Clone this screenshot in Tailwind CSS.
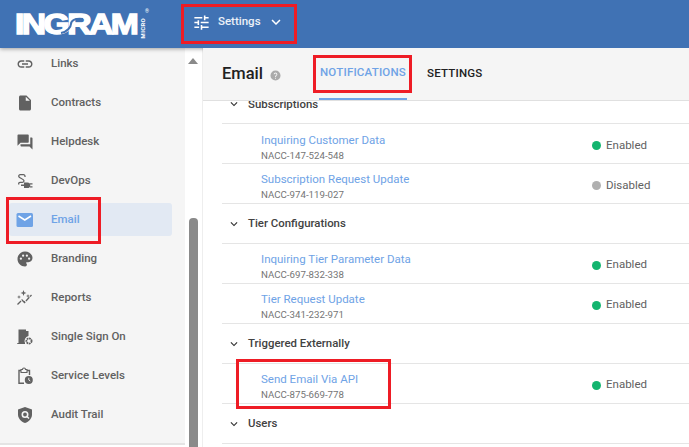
<!DOCTYPE html>
<html>
<head>
<meta charset="utf-8">
<script src="https://cdn.jsdelivr.net/npm/@tailwindcss/browser@4"></script>
</head>
<body class="m-0 overflow-hidden bg-white">
<div class="relative w-[689px] h-[447px] overflow-hidden bg-white font-['Roboto',sans-serif] flex flex-col">
  <header class="relative z-10 h-[48px] shrink-0 bg-[#4072b4] flex items-center text-white shadow-[0_1px_4px_rgba(0,0,0,0.35)]">
    <div class="relative w-[181px] h-full shrink-0">
      <div class="absolute left-[15px] top-[10px] h-[28px] origin-left scale-x-[1.16] font-['Liberation_Sans',sans-serif] font-black text-[29px] leading-[28px] tracking-[-2.2px] [-webkit-text-stroke:1.4px_white]">INGRAM</div>
      <svg class="absolute left-[60px] top-[13px] w-[24px] h-[24px]" viewBox="0 0 24 24" fill="none" stroke="#4072b4" stroke-width="2"><path d="M1 20c6-1 10-6 10-9 0-4 5-6 12-5"/></svg>
      <span class="absolute left-[139px] top-[18px] [writing-mode:vertical-rl] rotate-180 text-[6px] font-bold leading-[7px] tracking-[0.3px]">MICRO</span>
      <span class="absolute left-[145px] top-[9px] text-[5px] leading-[5px]">®</span>
    </div>
    <div class="w-[116px] h-full flex items-center pl-[11px] pb-[4px]">
      <svg class="w-[19px] h-[19px]" viewBox="0 0 24 24" fill="currentColor"><path d="M3 17v2h6v-2H3zM3 5v2h10V5H3zm10 16v-2h8v-2h-8v-2h-2v6h2zM7 9v2H3v2h4v2h2V9H7zm14 4v-2H11v2h10zm-6-4h2V7h4V5h-4V3h-2v6z"/></svg>
      <span class="ml-[7px] text-[11.5px] font-medium text-white/90">Settings</span>
      <svg class="ml-[6px] w-[18px] h-[18px]" viewBox="0 0 24 24" fill="currentColor"><path d="M7.410 8.590 12 13.170l4.590-4.580L18 10l-6 6-6-6z"/></svg>
    </div>
  </header>

  <div class="flex flex-1 min-h-0">
    <aside class="relative w-[185px] shrink-0 bg-[#f5f5f5] h-[397px] border-b-2 border-[#e4e4e4] flex flex-col pl-[9px] pr-[13px] overflow-hidden">
      <div class="mt-[-4px] flex flex-col text-[11.5px] font-medium text-[#616161]">
        <div class="h-[39.05px] flex items-center pl-[7px]"><svg class="w-[18px] h-[18px] text-[#616161]" viewBox="0 0 24 24" fill="currentColor"><path d="M3.900 12c0-1.710 1.390-3.100 3.100-3.100h4V7H7c-2.760 0-5 2.240-5 5s2.240 5 5 5h4v-1.900H7c-1.710 0-3.100-1.390-3.100-3.100zM8 13h8v-2H8v2zm9-6h-4v1.900h4c1.710 0 3.100 1.390 3.100 3.100s-1.390 3.100-3.100 3.100h-4V17h4c2.760 0 5-2.240 5-5s-2.240-5-5-5z"/></svg><span class="ml-[17px]">Links</span></div>
        <div class="h-[39.05px] flex items-center pl-[7px]"><svg class="w-[18px] h-[18px] text-[#616161]" viewBox="0 0 24 24" fill="currentColor"><path d="M14 2H6c-1.100 0-2 .9-2 2v16c0 1.100.9 2 2 2h12c1.100 0 2-.9 2-2V8l-6-6zm-1 7V3.500L18.500 9H13z"/></svg><span class="ml-[17px]">Contracts</span></div>
        <div class="h-[39.05px] flex items-center pl-[7px]"><svg class="w-[18px] h-[18px] text-[#616161]" viewBox="0 0 24 24" fill="currentColor"><path d="M21 6h-2v9H6v2c0 .55.45 1 1 1h11l4 4V7c0-.55-.45-1-1-1zm-4 6V3c0-.55-.45-1-1-1H3c-.55 0-1 .45-1 1v14l4-4h10c.55 0 1-.45 1-1z"/></svg><span class="ml-[17px]">Helpdesk</span></div>
        <div class="h-[39.05px] flex items-center pl-[7px]"><svg class="w-[18px] h-[18px] text-[#616161]" viewBox="0 0 18 18" fill="none" stroke="currentColor"><path d="M9 5V4.200A1.500 1.500 0 0 0 7.500 2.700H4.200A1.500 1.500 0 0 0 2.700 4.200C2.700 6.500 8 6.500 8 8.800A1.500 1.500 0 0 1 6.500 10.300H4A1.300 1.300 0 0 0 2.700 11.600V12.500" stroke-width="1.300"/><path d="M8 10.500h3.500a2.800 2.800 0 0 1 0 5.600H8zM5 12.600h3v1.400H5z" fill="currentColor" stroke="none"/><path d="M14 11.800h2.500M14 14.800h2.500" stroke-width="1.300"/></svg><span class="ml-[17px]">DevOps</span></div>
        <div class="h-[33px] my-[3.025px] flex items-center pl-[7px] bg-[#e2e9f3] rounded-[3px] text-[#6fa3e6]"><svg class="w-[18px] h-[18px]" viewBox="0 0 18 18"><rect x="0.500" y="2" width="16.500" height="14" rx="1.500" fill="#6fa3e6"/><path d="M2.500 5 8.800 9 15 5" fill="none" stroke="#fff" stroke-width="1.500"/></svg><span class="ml-[17px]">Email</span></div>
        <div class="h-[39.05px] flex items-center pl-[7px]"><svg class="w-[18px] h-[18px] text-[#616161]" viewBox="0 0 24 24" fill="currentColor"><path d="M12 2C6.490 2 2 6.490 2 12s4.490 10 10 10a2.500 2.500 0 0 0 1.870-4.160c-.3-.33-.37-.7-.2-1.040.17-.36.54-.6.950-.6H16.500c3.030 0 5.500-2.470 5.500-5.500C22 5.860 17.510 2 12 2zM6.500 13a1.500 1.500 0 1 1 0-3 1.500 1.500 0 0 1 0 3zm3-4a1.500 1.500 0 1 1 0-3 1.500 1.500 0 0 1 0 3zm5 0a1.500 1.500 0 1 1 0-3 1.500 1.500 0 0 1 0 3zm3 4a1.500 1.500 0 1 1 0-3 1.500 1.500 0 0 1 0 3z"/></svg><span class="ml-[17px]">Branding</span></div>
        <div class="h-[39.05px] flex items-center pl-[7px]"><svg class="w-[18px] h-[18px] text-[#616161]" viewBox="0 0 18 18" fill="currentColor"><path d="M1.500 15.500 6 11l2.500 2.500 7-7.500" fill="none" stroke="currentColor" stroke-width="1.300" stroke-dasharray="5 1"/><path d="M7.500 1 8.300 3.200 10.500 4 8.300 4.800 7.500 7 6.700 4.800 4.500 4 6.700 3.200zM3 6 3.500 7.500 5 8 3.500 8.500 3 10 2.500 8.500 1 8 2.500 7.500zM12 5 12.500 6.500 14 7 12.500 7.500 12 9 11.500 7.500 10 7 11.500 6.500z"/></svg><span class="ml-[17px]">Reports</span></div>
        <div class="h-[39.05px] flex items-center pl-[7px]"><svg class="w-[18px] h-[18px] text-[#616161]" viewBox="0 0 18 18" fill="currentColor"><path d="M2.500 15V1.500H10V3h2.500v5A5 5 0 0 0 9 15H1.500v1H9v-1zM7.500 8h1.300v1.500H7.500z"/><path d="M1.500 15h7v1h-7z"/><circle cx="13" cy="13" r="2.600" fill="none" stroke="currentColor" stroke-width="1.800" stroke-dasharray="1.800 .6"/></svg><span class="ml-[17px]">Single Sign On</span></div>
        <div class="h-[39.05px] flex items-center pl-[7px]"><svg class="w-[18px] h-[18px] text-[#616161]" viewBox="0 0 18 18" fill="none" stroke="currentColor" stroke-width="1.400"><path d="M8 16.300H3V3.500h2M11 3.500h2.500V8"/><path d="M5 2.500h1.500a1.500 1.500 0 0 1 3 0H11v3H5z" stroke-width="1.100"/><circle cx="12.800" cy="13" r="4" fill="currentColor" stroke="none"/><path d="M12.800 10.800V13l1.500 1" stroke="#f5f5f5" stroke-width="0.900"/></svg><span class="ml-[17px]">Service Levels</span></div>
        <div class="h-[39.05px] flex items-center pl-[7px]"><svg class="w-[18px] h-[18px] text-[#616161]" viewBox="0 0 18 18"><path d="M9 1 16 3.500v5c0 4-3 7.200-7 8.500-4-1.300-7-4.500-7-8.500v-5z" fill="currentColor"/><circle cx="9" cy="8.500" r="2.700" fill="none" stroke="#f5f5f5" stroke-width="1.600"/><path d="m11 10.500 2 2" stroke="#f5f5f5" stroke-width="1.500"/></svg><span class="ml-[17px]">Audit Trail</span></div>
      </div>
    </aside>

    <div class="relative w-[17px] shrink-0 bg-white">
      <div class="absolute left-[3px] top-[10px] w-0 h-0 border-x-[5px] border-x-transparent border-b-[6px] border-b-[#8a8a8a]"></div>
      <div class="absolute left-[4px] top-[170px] w-[9px] h-[240px] rounded-[4px] bg-[#8a8a8a]"></div>
    </div>

    <main class="flex-1 min-w-0 h-[399px] overflow-hidden border-l border-[#eeeeee] flex flex-col">
      <div class="relative z-10 h-[53px] shrink-0 bg-[#f5f5f5] border-b border-[#e0e0e0] flex pl-[19px]">
        <div class="flex items-center">
          <span class="text-[16.5px] font-medium text-[#212121]">Email</span>
          <svg class="ml-[7px] mt-[2px] w-[11px] h-[11px]" viewBox="0 0 24 24" fill="#aaaaaa"><path d="M12 1a11 11 0 1 0 0 22 11 11 0 0 0 0-22zm1 18h-2v-2h2v2zm2.500-7.700-.9.9c-.8.800-1.300 1.300-1.300 3.300h-2.300v-.5c0-1.100.5-2.100 1.300-2.900l1.200-1.300c.4-.3.600-.8.600-1.300a2 2 0 0 0-4 0H8a4 4 0 0 1 8 0c0 .7-.2 1.300-.5 1.800z"/></svg>
        </div>
        <div class="ml-[38px] w-[88px] h-full border-b-[2px] border-[#6fa3e6] -mb-px flex items-center justify-center text-[11.5px] font-medium tracking-[0.2px] text-[#6fa3e6] whitespace-nowrap">NOTIFICATIONS</div>
        <div class="ml-[20px] flex items-center text-[11.5px] font-medium tracking-[0.2px] text-[#212121]">SETTINGS</div>
      </div>

      <div class="pl-[19px] text-[11.4px]">
        <div class="relative h-[24px] -mt-[1px] border-b border-[#e5e5e5] flex items-end pb-[12px] font-medium text-[#424242]"><svg class="w-[14px] h-[14px] ml-[5px] mr-[7px] text-[#333] shrink-0" viewBox="0 0 24 24" fill="currentColor"><path d="M7.410 8.590 12 13.170l4.590-4.580L18 10l-6 6-6-6z"/></svg><span class="leading-[14px]">Subscriptions</span></div>

        <div class="h-[40px] border-b border-[#e5e5e5] flex items-center pl-[39px] pt-[4px]"><div class="w-[331px] pt-[3px]"><div class="text-[#6fa3e6] text-[11.5px] leading-[16px]">Inquiring Customer Data</div><div class="text-[#757575] text-[9.7px] leading-[15px]">NACC-147-524-548</div></div><span class="w-[9px] h-[9px] rounded-full bg-[#13b56f]"></span><span class="ml-[5px] text-[#616161] text-[11.5px]">Enabled</span></div>
        <div class="h-[39.500px] border-b border-[#e5e5e5] flex items-center pl-[39px] pt-[4px]"><div class="w-[331px] pt-[3px]"><div class="text-[#6fa3e6] text-[11.5px] leading-[16px]">Subscription Request Update</div><div class="text-[#757575] text-[9.7px] leading-[15px]">NACC-974-119-027</div></div><span class="w-[9px] h-[9px] rounded-full bg-[#b0b0b0]"></span><span class="ml-[5px] text-[#616161] text-[11.5px]">Disabled</span></div>

        <div class="h-[40px] border-b border-[#e5e5e5] flex items-center pt-[1px] font-medium text-[#424242]"><svg class="w-[14px] h-[14px] ml-[5px] mr-[7px] text-[#333]" viewBox="0 0 24 24" fill="currentColor"><path d="M7.410 8.590 12 13.170l4.590-4.580L18 10l-6 6-6-6z"/></svg>Tier Configurations</div>

        <div class="h-[40px] border-b border-[#e5e5e5] flex items-center pl-[39px] pt-[4px]"><div class="w-[331px] pt-[3px]"><div class="text-[#6fa3e6] text-[11.5px] leading-[16px]">Inquiring Tier Parameter Data</div><div class="text-[#757575] text-[9.7px] leading-[15px]">NACC-697-832-338</div></div><span class="w-[9px] h-[9px] rounded-full bg-[#13b56f]"></span><span class="ml-[5px] text-[#616161] text-[11.5px]">Enabled</span></div>
        <div class="h-[40px] border-b border-[#e5e5e5] flex items-center pl-[39px] pt-[4px]"><div class="w-[331px] pt-[3px]"><div class="text-[#6fa3e6] text-[11.5px] leading-[16px]">Tier Request Update</div><div class="text-[#757575] text-[9.7px] leading-[15px]">NACC-341-232-971</div></div><span class="w-[9px] h-[9px] rounded-full bg-[#13b56f]"></span><span class="ml-[5px] text-[#616161] text-[11.5px]">Enabled</span></div>

        <div class="h-[40px] border-b border-[#e5e5e5] flex items-center pt-[1px] font-medium text-[#424242]"><svg class="w-[14px] h-[14px] ml-[5px] mr-[7px] text-[#333]" viewBox="0 0 24 24" fill="currentColor"><path d="M7.410 8.590 12 13.170l4.590-4.580L18 10l-6 6-6-6z"/></svg>Triggered Externally</div>

        <div class="h-[40px] border-b border-[#e5e5e5] flex items-center pl-[39px] pt-[4px]"><div class="w-[331px] pt-[3px]"><div class="text-[#6fa3e6] text-[11.5px] leading-[16px]">Send Email Via API</div><div class="text-[#757575] text-[9.7px] leading-[15px]">NACC-875-669-778</div></div><span class="w-[9px] h-[9px] rounded-full bg-[#13b56f]"></span><span class="ml-[5px] text-[#616161] text-[11.5px]">Enabled</span></div>

        <div class="h-[40px] border-b border-[#e5e5e5] flex items-center pt-[1px] font-medium text-[#424242]"><svg class="w-[14px] h-[14px] ml-[5px] mr-[7px] text-[#333]" viewBox="0 0 24 24" fill="currentColor"><path d="M7.410 8.590 12 13.170l4.590-4.580L18 10l-6 6-6-6z"/></svg>Users</div>
      </div>
    </main>
  </div>

  <div class="absolute z-20 left-[181px] top-[4px] w-[116px] h-[40px] border-[3px] border-[#ee1c25]"></div>
  <div class="absolute z-20 left-[6px] top-[197px] w-[95px] h-[47px] border-[3px] border-[#ee1c25]"></div>
  <div class="absolute z-20 left-[313px] top-[55px] w-[99px] h-[38px] border-[3px] border-[#ee1c25]"></div>
  <div class="absolute z-20 left-[236px] top-[359px] w-[155px] h-[50px] border-[3px] border-[#ee1c25]"></div>
</div>
</body>
</html>
